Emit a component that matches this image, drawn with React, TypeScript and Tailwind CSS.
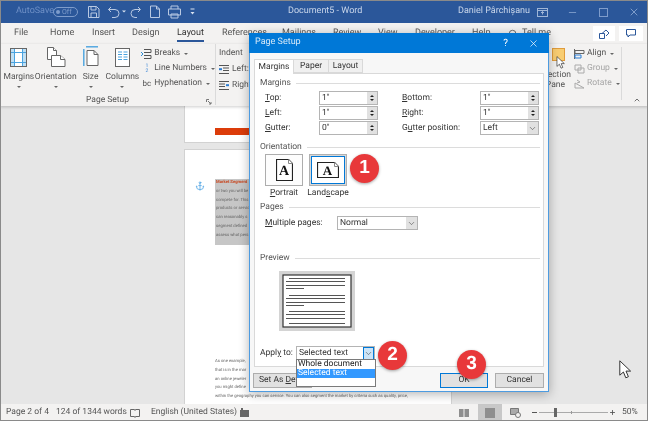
import React from "react";
import { Anchor, Search, X, ChevronDown, ChevronUp, Minus, Plus } from "lucide-react";

const ribbonTabs = [
  { label: "File", w: 36 },
  { label: "Home", w: 42 },
  { label: "Insert", w: 40 },
  { label: "Design", w: 45 },
  { label: "Layout", w: 45, active: true },
  { label: "References", w: 60 },
  { label: "Mailings", w: 51 },
  { label: "Review", w: 45 },
  { label: "View", w: 37 },
  { label: "Developer", w: 57 },
  { label: "Help", w: 38 },
];

function Caret({ className = "" }: { className?: string }) {
  return <span className={`inline-block w-0 h-0 border-x-[2px] border-x-transparent border-t-[2px] border-t-[#666] ${className}`} />;
}

function MarginsIcon() {
  return (
    <svg width="17" height="19" viewBox="0 0 17 19" fill="none">
      <rect x="0.5" y="0.5" width="16" height="18" fill="#fff" stroke="#666" />
      <rect x="1" y="1" width="3" height="17" fill="#bfe0f5" />
      <rect x="13" y="1" width="3" height="17" fill="#bfe0f5" />
      <path d="M4.500 1v17M12.500 1v17M1 4.500h15M1 14.500h15" stroke="#4aa3df" />
    </svg>
  );
}

function OrientationIcon() {
  return (
    <svg width="20" height="20" viewBox="0 0 20 20" fill="#fff" stroke="#666">
      <path d="M1.500.500h6l3 3v9h-9z" />
      <path d="M7.500.500v3h3" />
      <path d="M5.500 8.500h9l4.500 4v7H5.500z" />
      <path d="M14.500 8.500v4h4.500" />
    </svg>
  );
}

function SizeIcon() {
  return (
    <svg width="16" height="21" viewBox="0 0 16 21" fill="none">
      <path d="M3 .800h12" stroke="#4aa3df" strokeWidth="1.400" />
      <path d="M.800 3v17" stroke="#4aa3df" strokeWidth="1.400" />
      <path d="M4 4.500h7l4 4v11H4z" fill="#fff" stroke="#666" />
      <path d="M11 4.500v4h4" stroke="#666" />
    </svg>
  );
}

function ColumnsIcon() {
  return (
    <svg width="15" height="19" viewBox="0 0 15 19" fill="#fff" stroke="#666">
      <rect x="0.500" y="0.500" width="14" height="18" />
      <path d="M3 4h4M3 6.500h4M3 9h4M3 11.500h4M8.500 4h4M8.500 6.500h4M8.500 9h4M8.500 11.500h4" stroke="#4aa3df" />
    </svg>
  );
}

function BigButton({ label, width, icon }: { label: string; width: number; icon: React.ReactNode }) {
  return (
    <div className="flex flex-col items-center" style={{ width }}>
      <div className="h-[21px] flex items-end">{icon}</div>
      <span className="mt-[4px] leading-[12px] whitespace-nowrap">{label}</span>
      <Caret className="mt-[3px]" />
    </div>
  );
}

function SmallRow({ icon, label, muted }: { icon: React.ReactNode; label: string; muted?: boolean }) {
  return (
    <div className={`h-[15px] flex items-center gap-[2px] whitespace-nowrap ${muted ? "text-[#a6a6a6]" : ""}`}>
      <span className="w-[11px] flex justify-center">{icon}</span>
      <span>{label}</span>
      <Caret className="ml-[2px]" />
    </div>
  );
}

function Heading({ label }: { label: string }) {
  return (
    <div className="flex items-center gap-[5px] h-[12px] pl-[5px] pr-[3px]">
      <span className="text-[#555]">{label}</span>
      <span className="flex-1 h-px bg-[#dcdcdc]" />
    </div>
  );
}

function Spin({ value }: { value: string }) {
  return (
    <div className="w-[59px] h-[14px] flex border border-[#b4b4b4] bg-white">
      <span className="flex-1 pl-[2px] leading-[12px]">{value}</span>
      <span className="w-[10px] bg-[#e1e1e1] flex flex-col items-center justify-center gap-[2px]">
        <span className="w-0 h-0 border-x-[2px] border-x-transparent border-b-[2px] border-b-[#222]" />
        <span className="w-0 h-0 border-x-[2px] border-x-transparent border-t-[2px] border-t-[#222]" />
      </span>
    </div>
  );
}

function Select({ value, width, active }: { value: string; width: number; active?: boolean }) {
  return (
    <div className={`flex border border-[#b4b4b4] bg-white ${active ? "h-[15px]" : "h-[14px]"}`} style={{ width }}>
      <span className="flex-1 pl-[2px] leading-[12px]">{value}</span>
      <span className={`w-[11px] flex items-center justify-center ${active ? "bg-[#cce4f7] border border-[#0078d7]" : "bg-[#e1e1e1]"}`}>
        <ChevronDown size={9} strokeWidth={1.500} color="#444" />
      </span>
    </div>
  );
}

function OrientationCard({ label, landscape }: { label: React.ReactNode; landscape?: boolean }) {
  return (
    <div className="w-[38px] flex flex-col items-center">
      <div className={`w-[38px] h-[32px] flex items-center justify-center border ${landscape ? "bg-[#d8d8d8] border-[#b0b0b0] p-px" : "bg-[#fdfdfd] border-[#adadad]"}`}>
        <div className={`flex items-center justify-center ${landscape ? "w-full h-full bg-white border border-[#0078d7]" : ""}`}>
          {landscape ? (
            <svg width="22" height="16" viewBox="0 0 22 16" fill="#fff" stroke="#222">
              <path d="M.500.500h17l4 4v11H.500z" strokeWidth="1.200" />
              <path d="M17.500.500v4h4" stroke="#888" />
              <text x="10.500" y="12.500" textAnchor="middle" fontSize="13" fontWeight="700" fontFamily="'Liberation Serif', serif" fill="#111" stroke="none">A</text>
            </svg>
          ) : (
            <svg width="17" height="22" viewBox="0 0 17 22" fill="#fff" stroke="#222">
              <path d="M.500.500h12l4 4v17H.500z" strokeWidth="1.200" />
              <path d="M12.500.500v4h4" stroke="#888" />
              <text x="8" y="16" textAnchor="middle" fontSize="14" fontWeight="700" fontFamily="'Liberation Serif', serif" fill="#111" stroke="none">A</text>
            </svg>
          )}
        </div>
      </div>
      <span className="mt-[1px] leading-[12px] whitespace-nowrap">{label}</span>
    </div>
  );
}

function Badge({ n, className }: { n: number; className: string }) {
  return (
    <div className={`absolute w-[29px] h-[29px] rounded-full bg-[#e8383a] text-white text-[19px] font-bold flex items-center justify-center shadow-[0_1px_3px_rgba(0,0,0,0.35)] font-['Liberation_Sans',sans-serif] ${className}`}>
      {n}
    </div>
  );
}

function Arrow({ className, width, height }: { className: string; width: number; height: number }) {
  return (
    <svg className={`absolute ${className}`} width={width} height={height} viewBox="0 0 12 19">
      <path d="M.800.800v14.400l3.600-3.200 2.400 5.800 2.600-1.100-2.400-5.600h4.600z" fill="#fff" stroke="#333" strokeWidth="1" />
    </svg>
  );
}

function PreviewDrawing() {
  const lines = [
    [9, 66], [6, 66], [6, 66], [6, 25],
    [9, 66], [6, 66], [6, 66], [6, 25],
    [9, 66], [6, 66], [6, 66], [9, 66],
  ];
  const ys = [7, 10, 14, 17, 24, 27, 31, 34, 40, 43, 47, 52];
  return (
    <svg width="76" height="60" viewBox="0 0 76 60">
      <rect width="76" height="60" fill="#d4d4d4" />
      <rect x="4" y="4" width="68" height="52" fill="#fff" stroke="#333" strokeWidth="1.200" />
      {lines.map(([x1, x2], i) => (
        <path key={i} d={`M${x1 + 1} ${ys[i] + 0.5}H${x2}`} stroke="#555" strokeWidth="1" />
      ))}
    </svg>
  );
}

export default function App() {
  return (
    <div className="relative w-[648px] h-[421px] overflow-hidden flex flex-col bg-[#e6e6e6] text-[8.500px] text-[#444] font-['Roboto',sans-serif] [text-rendering:geometricPrecision] blur-[0.4px]">
      {/* title bar */}
      <div className="h-[23px] shrink-0 bg-[#2b579a] flex items-center text-[#c9d6ea] text-[9px] pt-px">
        <span className="ml-[16px] w-[37px] text-[#6f90c6]">AutoSave</span>
        <span className="w-[25px] h-[10px] rounded-full border border-[#7e9ccb] flex items-center text-[7px] text-[#7e9ccb] pl-[2px] gap-[2px]">
          <span className="w-[4px] h-[4px] rounded-full bg-[#7e9ccb]" />
          Off
        </span>
        <svg className="ml-[10px]" width="110" height="14" viewBox="0 0 110 14" fill="none" stroke="#b9c9e2">
          <path d="M.500 1.500h8l2.500 2.500v8.500H.500zM3 1.500v3.500h5v-3.500M3 12.500v-4.500h5.500v4.500" />
          <path d="M23 2l-2.500 2.500L23 7M20.500 4.500h6.500a3.800 3.800 0 0 1 0 8h-3" />
          <path d="M34 5.500h4l-2 2z" fill="#d8e2f0" stroke="none" />
          <path d="M50 2l2.500 2.500L50 7M52 4.500h-5a3.800 3.800 0 0 0 0 8h2" />
          <path d="M62.500 1h6l3 3v8.500h-9zM68.500 1v3h3" />
          <path d="M83 4V1h7v3M80.500 4h12v6h-12zM83 9h7v4h-7z" />
          <path d="M102.500 4h4" stroke="#d8e2f0" />
          <path d="M102.500 7h4l-2 2.500z" fill="#d8e2f0" stroke="none" />
        </svg>
        <span className="ml-[90px] w-[76px] whitespace-nowrap">Document5 - Word</span>
        <span className="ml-[94px] w-[65px] whitespace-nowrap">Daniel Pârchișanu</span>
        <svg className="ml-[14px]" width="11" height="9" viewBox="0 0 11 9" fill="none" stroke="#9fb5d6">
          <rect x="0.500" y="0.500" width="10" height="8" />
          <path d="M5.500 6.500v-3M4 5l1.500-1.500L7 5M1 2.500h9" />
        </svg>
        <Minus className="ml-[19px]" size={11} color="#7e9ccb" />
        <span className="ml-[21px] w-[9px] h-[9px] border border-[#7e9ccb]" />
        <X className="ml-[20px]" size={12} color="#7e9ccb" />
      </div>

      {/* ribbon tabs */}
      <div className="h-[21px] shrink-0 bg-[#f3f2f1] flex items-center pl-[14px] text-[9px] text-[#555]">
        {ribbonTabs.map((tab) => (
          <div key={tab.label} style={{ width: tab.w }}>
            <span className={`inline-block leading-[14px] ${tab.active ? "border-b-2 border-[#2b579a] text-[#333]" : ""}`}>{tab.label}</span>
          </div>
        ))}
        <Search size={10} className="-ml-[2px]" />
        <span className="ml-[4px]">Tell me</span>
        <div className="ml-auto flex gap-[4px] pr-[5px]">
          <span className="w-[22px] h-[15px] bg-white flex items-center justify-center">
            <svg width="11" height="10" viewBox="0 0 11 10" fill="none" stroke="#2b579a">
              <path d="M.500 4.500h5v5H.500zM3 4.500L7 1l3 3-3 3" />
            </svg>
          </span>
          <span className="w-[24px] h-[15px] bg-white flex items-center justify-center">
            <svg width="10" height="9" viewBox="0 0 10 9" fill="none" stroke="#2b579a">
              <path d="M.500.500h9v5.500H4L2 8V6H.500z" />
            </svg>
          </span>
        </div>
      </div>

      {/* ribbon */}
      <div className="h-[62px] shrink-0 bg-[#f3f2f1] flex text-[#555] shadow-[0_1px_3px_rgba(0,0,0,0.2)] z-10">
        <div className="w-[216px] shrink-0 flex flex-col border-r border-[#dadada] mb-[1px]">
          <div className="flex h-[50px] shrink-0 pl-[2px] pt-[2px]">
            <BigButton label="Margins" width={34} icon={<MarginsIcon />} />
            <BigButton label="Orientation" width={40} icon={<OrientationIcon />} />
            <BigButton label="Size" width={30} icon={<SizeIcon />} />
            <BigButton label="Columns" width={34} icon={<ColumnsIcon />} />
            <div className="ml-[2px] flex flex-col">
              <SmallRow label="Breaks" icon={<svg width="11" height="10" viewBox="0 0 11 10" fill="none" stroke="#555"><path d="M3 .500h7v3H3M3 9.500h7v-3H3" /><path d="M0 3l2 2-2 2" stroke="#2f8fd8" /></svg>} />
              <SmallRow label="Line Numbers" icon={<span className="text-[5px] leading-[5px] text-[#2b7cd3]">1<br />2</span>} />
              <SmallRow label="Hyphenation" icon={<span className="text-[8px] leading-[8px]">bc</span>} />
            </div>
          </div>
          <div className="relative flex-1 flex items-center justify-center">
            Page Setup
            <svg className="absolute right-[3px] bottom-[2px]" width="6" height="6" viewBox="0 0 6 6" fill="none" stroke="#777"><path d="M.500 3V.500H3M2 2l3 3M5 3v2H3" /></svg>
          </div>
        </div>
        <div className="flex-1 pl-[3px] pt-[2px]">
          <div className="h-[14px] leading-[14px]">Indent</div>
          <div className="mt-[1px] h-[16px] flex items-center gap-[3px]">
            <svg width="10" height="9" viewBox="0 0 10 9" fill="none" stroke="#555"><path d="M0 .500h10M4 3h6M4 5.500h6M0 8.500h10" /><path d="M0 4.200h3" stroke="#2b7cd3" strokeWidth="2" /></svg>
            Left:
          </div>
          <div className="h-[16px] flex items-center gap-[3px]">
            <svg width="10" height="9" viewBox="0 0 10 9" fill="none" stroke="#555"><path d="M0 .500h10M0 3h6M0 5.500h6M0 8.500h10" /><path d="M7 4.200h3" stroke="#2b7cd3" strokeWidth="2" /></svg>
            Right:
          </div>
        </div>
        <div className="w-[97px] shrink-0 flex pl-[1px] relative">
          <div className="w-[19px] pt-[4px] flex flex-col items-end">
            <span className="w-[13px] h-[13px] mr-[6px] bg-[#f8cd72] border border-[#e09c3c]" />
            <span className="mt-[9px] leading-[10px] whitespace-nowrap">ection</span>
            <span className="leading-[11px] mr-[6px]">Pane</span>
          </div>
          <div className="ml-[3px] pt-[2px]">
            <SmallRow label="Align" icon={<svg width="11" height="10" viewBox="0 0 11 10" fill="none" stroke="#666"><path d="M.500 0v10M1 1.500h9v3H1z" /><path d="M1 6h6v3H1z" stroke="#2b7cd3" /></svg>} />
            <SmallRow muted label="Group" icon={<svg width="11" height="10" viewBox="0 0 11 10" fill="none" stroke="#aaa"><path d="M1 1h6v5H1zM4 4h6v5H4z" /></svg>} />
            <SmallRow muted label="Rotate" icon={<svg width="11" height="10" viewBox="0 0 11 10" fill="none" stroke="#aaa"><path d="M1 9h9L1 4zM3 1l3 2-3 1" /></svg>} />
          </div>
          <span className="absolute right-[26px] top-[3px] bottom-[6px] w-px bg-[#dadada]" />
          <ChevronUp size={8} strokeWidth={2.500} color="#555" className="absolute right-[7px] bottom-[2px]" />
        </div>
      </div>

      {/* document */}
      <div className="flex-1 min-h-0 overflow-hidden pl-[184px] text-[4.200px] leading-[8.800px] text-[#666]">
        <div className="w-[268px] h-[37px] bg-white border-b border-x border-[#d2d2d2] pt-[22px] pl-[30px] overflow-hidden">
          <div className="w-[120px] h-[7px] bg-[#dc3c0a]" />
        </div>
        <div className="mt-[6px] w-[268px] h-[260px] bg-white border border-[#d2d2d2] pt-[29px] pl-[30px] relative overflow-hidden whitespace-nowrap">
          <Anchor size={10} color="#5aa9e6" className="absolute left-[10px] top-[31px]" />
          <div className="w-[120px] h-[66px] bg-[#c6c6c6] pl-px">
            <div className="font-bold text-[#c8451e]">Market Segment</div>
            <div>or two you will be</div>
            <div>compete for. This</div>
            <div>products or service</div>
            <div>can reasonably s</div>
            <div>segment defined</div>
            <div>assess what pers</div>
          </div>
          <div className="mt-[113px]">
            <div>As one example,</div>
            <div>that is in the mar</div>
            <div>an online jeweler</div>
            <div>you might define</div>
            <div>within the geography you can service. You can also segment the market by criteria such as quality, price,</div>
          </div>
        </div>
      </div>

      {/* status bar */}
      <div className="h-[17px] shrink-0 bg-[#f3f2f1] flex items-center text-[#555] pl-[6px] z-10">
        <span className="w-[50px]">Page 2 of 4</span>
        <span className="w-[74px]">124 of 1344 words</span>
        <svg width="10" height="10" viewBox="0 0 10 10" fill="none" stroke="#666"><path d="M.500 1.500h4l.500 1 .500-1h4v7h-4l-.500 1-.500-1h-4z" /></svg>
        <span className="ml-[11px] w-[89px]">English (United States)</span>
        <svg width="9" height="9" viewBox="0 0 9 9" fill="#666"><path d="M0 2h9v7H0z" /><path d="M1 0h2v2H1z" /></svg>
        <svg className="ml-[210px]" width="10" height="10" viewBox="0 0 10 10" fill="#8e8e8e"><path d="M0 1h4.500v8H0zM5.500 1H10v8H5.500z" /></svg>
        <span className="ml-[9px] w-[24px] h-[17px] bg-[#c8c8c8] flex items-center justify-center">
          <span className="w-[10px] h-[10px] bg-[#8e8e8e]" />
        </span>
        <svg className="ml-[8px]" width="11" height="11" viewBox="0 0 11 11" fill="none" stroke="#777"><path d="M.500 1.500h8v6h-8z" fill="#aaa" /><circle cx="8" cy="8" r="2.500" fill="#f3f2f1" /></svg>
        <span className="ml-[11px] w-[5px] h-px bg-[#555]" />
        <span className="ml-[2px] w-[69px] h-px bg-[#aaa] relative">
          <span className="absolute left-[15px] -top-[4px] w-[3px] h-[9px] bg-[#666]" />
          <span className="absolute left-[32px] -top-[1px] w-px h-[3px] bg-[#999]" />
        </span>
        <Plus size={7} strokeWidth={3} className="ml-[1px]" />
        <span className="ml-[6px]">50%</span>
      </div>

      {/* page setup dialog */}
      <div className="absolute left-[249px] top-[33px] w-[300px] h-[359px] bg-[#f7f7f7] border border-[#4d9be0] shadow-[0_2px_10px_rgba(0,0,0,0.3)] z-20 flex flex-col text-[#333]">
        <div className="h-[20px] shrink-0 -mx-px -mt-px bg-[#0078d7] text-white text-[9px] flex items-center px-[6px] pr-[10px]">
          <span className="flex-1 text-[#d7e9f8]">Page Setup</span>
          <span className="mr-[20px] text-[10px]">?</span>
          <X size={11} strokeWidth={1.500} />
        </div>
        <div className="flex items-end h-[20px] pl-[4px] relative z-10 shrink-0">
          <div className="w-[40px] h-[15px] bg-white border border-b-0 border-[#d9d9d9] flex items-center justify-center -mb-px">Margins</div>
          <div className="w-[35px] h-[14px] bg-[#f0f0f0] border-y border-r border-[#d9d9d9] flex items-center justify-center">Paper</div>
          <div className="w-[34px] h-[14px] bg-[#f0f0f0] border-y border-r border-[#d9d9d9] flex items-center justify-center">Layout</div>
        </div>
        <div className="mx-[4px] h-[294px] shrink-0 bg-white border border-[#d9d9d9] pt-[3px]">
          <Heading label="Margins" />
          <div className="mt-[2px] pl-[10px] pr-[4px] grid grid-cols-[54px_59px_auto_59px] items-center justify-between gap-y-px">
            <span><u>T</u>op:</span>
            <Spin value="1&quot;" />
            <span className="ml-[24px] w-[78px]"><u>B</u>ottom:</span>
            <Spin value="1&quot;" />
            <span><u>L</u>eft:</span>
            <Spin value="1&quot;" />
            <span className="ml-[24px] w-[78px]"><u>R</u>ight:</span>
            <Spin value="1&quot;" />
            <span><u>G</u>utter:</span>
            <Spin value="0&quot;" />
            <span className="ml-[24px] w-[78px]">G<u>u</u>tter position:</span>
            <Select value="Left" width={59} />
          </div>
          <div className="mt-[6px]">
            <Heading label="Orientation" />
          </div>
          <div className="mt-[1px] pl-[10px] flex gap-[6px]">
            <OrientationCard label={<><u>P</u>ortrait</>} />
            <OrientationCard label={<>Land<u>s</u>cape</>} landscape />
          </div>
          <div className="mt-[2px]">
            <Heading label="Pages" />
          </div>
          <div className="mt-[3px] pl-[10px] flex items-center">
            <span className="w-[72px]"><u>M</u>ultiple pages:</span>
            <Select value="Normal" width={81} />
          </div>
          <div className="mt-[22px]">
            <Heading label="Preview" />
          </div>
          <div className="mt-[7px] pl-[24px]">
            <PreviewDrawing />
          </div>
          <div className="mt-[15px] pl-[5px] flex items-center relative">
            <span className="w-[36px]">Appl<u>y</u> to:</span>
            <Select value="Selected text" width={79} active />
          </div>
        </div>
        <div className="flex-1 flex items-start pt-[6px] pl-[3px] pr-[4px] gap-[7px]">
          <div className="w-[59px] h-[15px] bg-[#e1e1e1] border border-[#adadad] flex items-center pl-[5px] whitespace-pre overflow-hidden">Set As <u>D</u>efa</div>
          <div className="ml-auto w-[48px] h-[15px] bg-[#e1e1e1] border border-[#0078d7] flex items-center justify-center">OK</div>
          <div className="w-[49px] h-[15px] bg-[#e1e1e1] border border-[#adadad] flex items-center justify-center">Cancel</div>
        </div>
        {/* apply to dropdown list */}
        <div className="absolute left-[46px] top-[325px] w-[80px] h-[28px] bg-white border border-[#7a7a7a] text-[#222] leading-[9px] z-10">
          <div className="pl-px">Whole document</div>
          <div className="pl-px bg-[#3399ff] text-white">Selected text</div>
        </div>
      </div>

      <Badge n={1} className="left-[350px] top-[154px] z-30" />
      <Badge n={2} className="left-[378px] top-[341px] z-30" />
      <Badge n={3} className="left-[457px] top-[350px] z-30" />

      <Arrow className="left-[556px] top-[56px] z-10" width={9} height={13} />
      <Arrow className="left-[619px] top-[360px] z-10" width={12} height={19} />

      {/* window border */}
      <div className="absolute inset-0 border border-[#8a8a8a] pointer-events-none z-40" />
    </div>
  );
}
